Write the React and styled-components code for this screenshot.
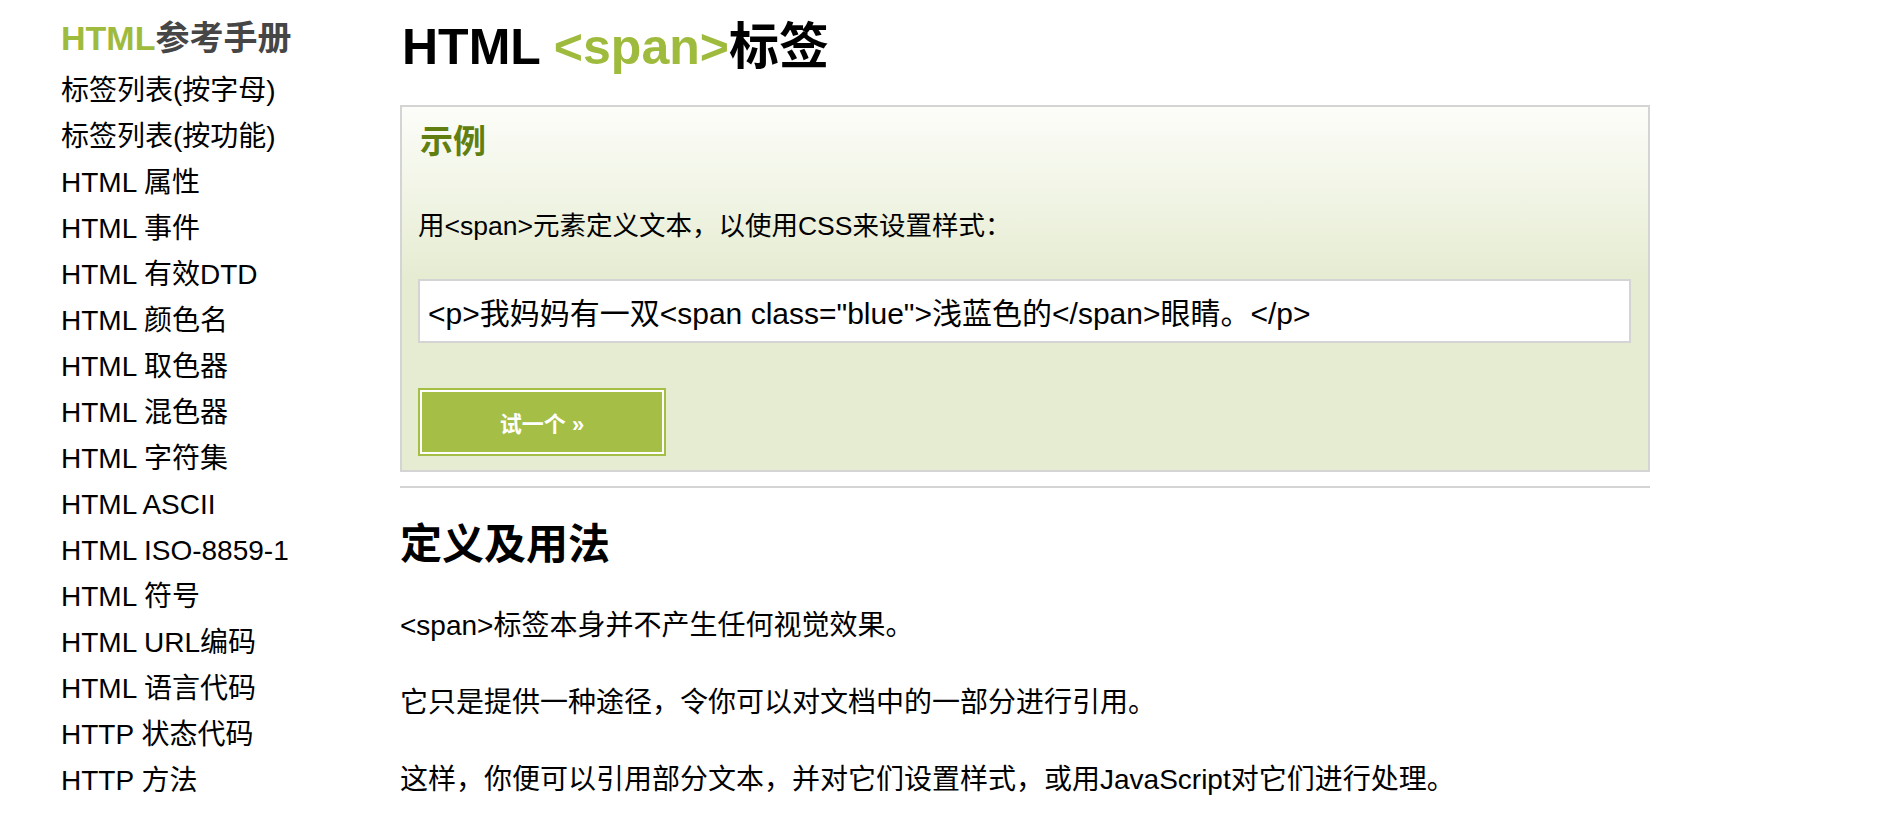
import styled, { createGlobalStyle } from "styled-components";

const GlobalStyle = createGlobalStyle`
  html, body {
    margin: 0;
    padding: 0;
    background: #fff;
  }
  body {
    font-family: "Liberation Sans", Arial, "Noto Sans CJK SC", sans-serif;
    color: #000;
  }
`;

const sideLinks = [
  "标签列表(按字母)",
  "标签列表(按功能)",
  "HTML 属性",
  "HTML 事件",
  "HTML 有效DTD",
  "HTML 颜色名",
  "HTML 取色器",
  "HTML 混色器",
  "HTML 字符集",
  "HTML ASCII",
  "HTML ISO-8859-1",
  "HTML 符号",
  "HTML URL编码",
  "HTML 语言代码",
  "HTTP 状态代码",
  "HTTP 方法",
];

const paragraphs = [
  "<span>标签本身并不产生任何视觉效果。",
  "它只是提供一种途径，令你可以对文档中的一部分进行引用。",
  "这样，你便可以引用部分文本，并对它们设置样式，或用JavaScript对它们进行处理。",
];

const App = () => {
  return (
    <>
      <GlobalStyle />
      <Page>
        <Sidebar>
          <SideTitle>
            <Green>HTML</Green>参考手册
          </SideTitle>
          <SideList>
            {sideLinks.map((link) => (
              <SideItem key={link}>{link}</SideItem>
            ))}
          </SideList>
        </Sidebar>
        <Main>
          <Title>
            HTML <Green>&lt;span&gt;</Green>标签
          </Title>
          <Example>
            <ExampleHead>示例</ExampleHead>
            <ExampleText>用&lt;span&gt;元素定义文本，以使用CSS来设置样式：</ExampleText>
            <Code>
              &lt;p&gt;我妈妈有一双&lt;span class="blue"&gt;浅蓝色的&lt;/span&gt;眼睛。&lt;/p&gt;
            </Code>
            <TryButton>试一个 »</TryButton>
          </Example>
          <Rule />
          <SubTitle>定义及用法</SubTitle>
          {paragraphs.map((text) => (
            <Para key={text}>{text}</Para>
          ))}
        </Main>
      </Page>
    </>
  );
};

const Page = styled.div`
  display: flex;
  align-items: flex-start;
`;

const Sidebar = styled.nav`
  width: 400px;
  padding: 15px 0 0 61px;
  box-sizing: border-box;
  flex-shrink: 0;
`;

const SideTitle = styled.h2`
  margin: 0;
  font-size: 34px;
  line-height: 46px;
  font-weight: bold;
  color: #464646;
`;

const Green = styled.span`
  color: #9fbb3d;
`;

const SideList = styled.ul`
  list-style: none;
  margin: 7px 0 0;
  padding: 0;
`;

const SideItem = styled.li`
  font-size: 28px;
  line-height: 46px;
  color: #000;
  white-space: nowrap;
`;

const Main = styled.main`
  width: 1250px;
  flex-shrink: 0;
`;

const Title = styled.h1`
  margin: 16px 0 0 2px;
  font-size: 50px;
  line-height: 62px;
  font-weight: bold;
`;

const Example = styled.section`
  margin-top: 27px;
  border: 2px solid #d4d4d4;
  padding: 0 17px 14px 16px;
  background: linear-gradient(to bottom, #fcfdf9 0%, #e6ecd2 47%, #e6ecd2 100%);
`;

const ExampleHead = styled.h3`
  margin: 15px 0 0 2px;
  font-size: 33px;
  line-height: 40px;
  font-weight: bold;
  color: #617f10;
`;

const ExampleText = styled.p`
  margin: 44px 0 0;
  font-size: 26.5px;
  line-height: 40px;
`;

const Code = styled.div`
  margin-top: 33px;
  height: 64px;
  box-sizing: border-box;
  border: 2px solid #d4d4d4;
  background: #fff;
  padding: 0 8px;
  display: flex;
  align-items: center;
  font-size: 30px;
  white-space: nowrap;
`;

const TryButton = styled.button`
  display: flex;
  align-items: center;
  justify-content: center;
  margin-top: 45px;
  width: 248px;
  height: 68px;
  border: 2px solid #a4be46;
  box-shadow: inset 0 0 0 2px #fff;
  background: #a4be46;
  color: #fff;
  font-family: inherit;
  font-size: 22px;
  font-weight: bold;
  padding: 0;
`;

const Rule = styled.hr`
  margin: 14px 0 0;
  height: 2px;
  border: 0;
  background: #d4d4d4;
`;

const SubTitle = styled.h2`
  margin: 32px 0 0;
  font-size: 42px;
  line-height: 50px;
  font-weight: bold;
`;

const Para = styled.p`
  margin: 36px 0 0;
  font-size: 28px;
  line-height: 40px;
  & + & {
    margin-top: 37px;
  }
`;

export default App;
